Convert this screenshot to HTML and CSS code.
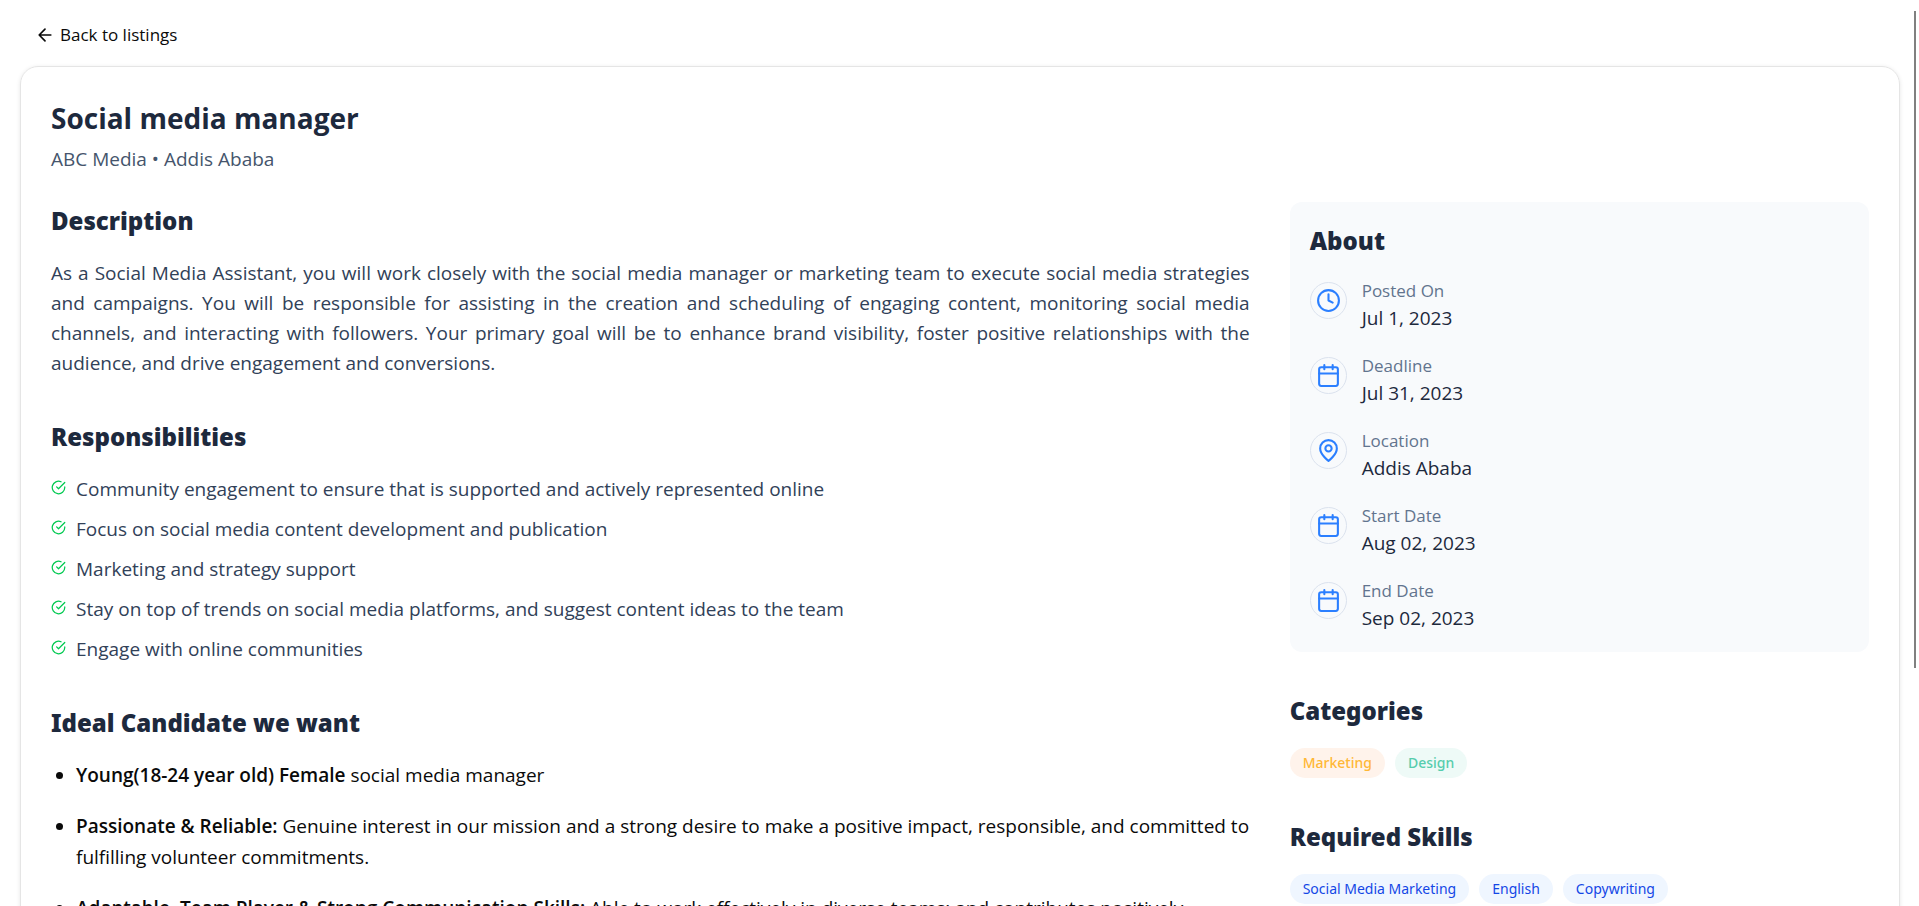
FILE: index.html
```html
<!DOCTYPE html>
<html lang="en">
<head>
<meta charset="utf-8">
<meta name="viewport" content="width=device-width, initial-scale=1">
<title>Social media manager</title>
<link rel="stylesheet" href="styles.css">
</head>
<body>
<svg class="sprite" aria-hidden="true">
  <symbol id="check" viewBox="0 0 24 24"><path d="M22 11.08V12a10 10 0 1 1-5.93-9.14"/><path d="M22 4 12 14.01l-3-3"/></symbol>
  <symbol id="clock" viewBox="0 0 24 24"><circle cx="12" cy="12" r="10"/><path d="M12 6v6l4 2"/></symbol>
  <symbol id="calendar" viewBox="0 0 24 24"><rect x="3" y="4" width="18" height="18" rx="2"/><path d="M16 2v4M8 2v4M3 10h18"/></symbol>
  <symbol id="pin" viewBox="0 0 24 24"><path d="M20 10c0 6-8 12-8 12s-8-6-8-12a8 8 0 0 1 16 0Z"/><circle cx="12" cy="10" r="3"/></symbol>
  <symbol id="arrow" viewBox="0 0 24 24"><path d="m12 19-7-7 7-7M19 12H5"/></symbol>
</svg>
<div class="page">
  <nav class="topbar">
    <a class="back" href="#"><svg class="icon"><use href="#arrow"/></svg>Back to listings</a>
  </nav>
  <article class="card">
    <header class="card-header">
      <h1 class="title">Social media manager</h1>
      <p class="subtitle">ABC Media • Addis Ababa</p>
    </header>
    <div class="columns">
      <main class="main">
        <section class="section">
          <h2 class="heading">Description</h2>
          <p class="description">As a Social Media Assistant, you will work closely with the social media manager or marketing team to execute social media strategies and campaigns. You will be responsible for assisting in the creation and scheduling of engaging content, monitoring social media channels, and interacting with followers. Your primary goal will be to enhance brand visibility, foster positive relationships with the audience, and drive engagement and conversions.</p>
        </section>
        <section class="section">
          <h2 class="heading">Responsibilities</h2>
          <ul class="checks">
            <li class="check"><svg class="icon"><use href="#check"/></svg>Community engagement to ensure that is supported and actively represented online</li>
            <li class="check"><svg class="icon"><use href="#check"/></svg>Focus on social media content development and publication</li>
            <li class="check"><svg class="icon"><use href="#check"/></svg>Marketing and strategy support</li>
            <li class="check"><svg class="icon"><use href="#check"/></svg>Stay on top of trends on social media platforms, and suggest content ideas to the team</li>
            <li class="check"><svg class="icon"><use href="#check"/></svg>Engage with online communities</li>
          </ul>
        </section>
        <section class="section">
          <h2 class="heading">Ideal Candidate we want</h2>
          <ul class="traits">
            <li><strong>Young(18-24 year old) Female</strong> social media manager</li>
            <li><strong>Passionate &amp; Reliable:</strong> Genuine interest in our mission and a strong desire to make a positive impact, responsible, and committed to fulfilling volunteer commitments.</li>
            <li><strong>Adaptable, Team Player &amp; Strong Communication Skills:</strong> Able to work effectively in diverse teams; and contributes positively.</li>
          </ul>
        </section>
      </main>
      <aside class="side">
        <section class="about">
          <h2 class="heading">About</h2>
          <dl class="facts">
            <div class="fact"><span class="badge"><svg class="icon"><use href="#clock"/></svg></span><div><dt>Posted On</dt><dd>Jul 1, 2023</dd></div></div>
            <div class="fact"><span class="badge"><svg class="icon"><use href="#calendar"/></svg></span><div><dt>Deadline</dt><dd>Jul 31, 2023</dd></div></div>
            <div class="fact"><span class="badge"><svg class="icon"><use href="#pin"/></svg></span><div><dt>Location</dt><dd>Addis Ababa</dd></div></div>
            <div class="fact"><span class="badge"><svg class="icon"><use href="#calendar"/></svg></span><div><dt>Start Date</dt><dd>Aug 02, 2023</dd></div></div>
            <div class="fact"><span class="badge"><svg class="icon"><use href="#calendar"/></svg></span><div><dt>End Date</dt><dd>Sep 02, 2023</dd></div></div>
          </dl>
        </section>
        <section>
          <h2 class="heading">Categories</h2>
          <ul class="tags">
            <li class="tag tag-orange">Marketing</li>
            <li class="tag tag-green">Design</li>
          </ul>
        </section>
        <section>
          <h2 class="heading">Required Skills</h2>
          <ul class="tags">
            <li class="tag tag-blue">Social Media Marketing</li>
            <li class="tag tag-blue">English</li>
            <li class="tag tag-blue">Copywriting</li>
          </ul>
        </section>
      </aside>
    </div>
  </article>
</div>
<div class="scroll-thumb" aria-hidden="true"></div>
</body>
</html>
```
FILE: styles.css
```css
* { box-sizing: border-box; margin: 0; padding: 0; }
html { scrollbar-width: none; }
body {
  background: #fff;
  color: #0a0a0a;
  font: 19px/30px "Open Sans", "Noto Sans", sans-serif;
}
ul { list-style: none; }
.sprite { display: none; }
.icon {
  flex: none;
  width: 1em;
  height: 1em;
  fill: none;
  stroke: currentColor;
  stroke-width: 2;
  stroke-linecap: round;
  stroke-linejoin: round;
}
.page { padding: 20px 19px 20px 20px; }
.topbar { display: flex; padding: 0 15px 16px; }
.back {
  display: inline-flex;
  align-items: center;
  gap: 5px;
  color: #0a0a0a;
  font-size: 17px;
  text-decoration: none;
}
.back .icon { width: 20px; height: 20px; }
.card {
  padding: 30px;
  border: 1px solid #e5e5e5;
  border-radius: 18px;
  box-shadow: 0 1px 4px rgba(0, 0, 0, 0.1);
}
.card-header { margin-bottom: 28px; }
.title { margin-bottom: 5px; color: #1d293d; font-size: 28px; line-height: 42px; font-weight: 700; }
.subtitle { color: #45556c; }
.columns { display: grid; grid-template-columns: repeat(3, minmax(0, 1fr)); gap: 40px; }
.main { grid-column: span 2; }
.main, .side { display: flex; flex-direction: column; gap: 40px; }
.heading {
  margin-bottom: 19px;
  color: #1d293d;
  font-family: "Noto Sans", "Open Sans", sans-serif;
  font-size: 24px;
  line-height: 37px;
  font-weight: 900;
}
.description { color: #314158; text-align: justify; }
.checks { display: grid; gap: 10px; color: #314158; }
.check { display: flex; align-items: flex-start; gap: 10px; }
.check .icon { width: 15px; height: 15px; margin-top: 6px; color: #00c950; }
.traits {
  display: grid;
  gap: 20px;
  padding-left: 25px;
  line-height: 31px;
  list-style: disc;
}
.traits strong { font-weight: 600; }
.about { padding: 20px; border-radius: 12px; background: #f8fafc; }
.facts { display: grid; gap: 20px; }
.fact { display: flex; gap: 15px; }
.badge {
  display: grid;
  place-items: center;
  flex: none;
  width: 37px;
  height: 37px;
  margin-top: 5px;
  border: 1px solid #dbe2ee;
  border-radius: 50%;
  color: #2b7fff;
}
.badge .icon { width: 25px; height: 25px; }
.about .heading { margin-bottom: 18px; }
.fact dt { color: #62748e; font-size: 17px; line-height: 28px; }
.fact dd { color: #1d293d; line-height: 27px; }
.tags { display: flex; flex-wrap: wrap; gap: 10px; }
.tag {
  padding: 0 13px;
  border-radius: 15px;
  font-family: "Noto Sans", "Open Sans", sans-serif;
  font-size: 14px;
}
.tag-orange { background: #fff3eb; color: #ffb836; font-weight: 500; }
.tag-green { background: #eefaf7; color: #56cdad; font-weight: 500; }
.tag-blue { background: #eff6ff; color: #1447e6; }
.scroll-thumb {
  position: fixed;
  top: 11px;
  right: 3px;
  width: 2px;
  height: 657px;
  background: #808080;
}
```
